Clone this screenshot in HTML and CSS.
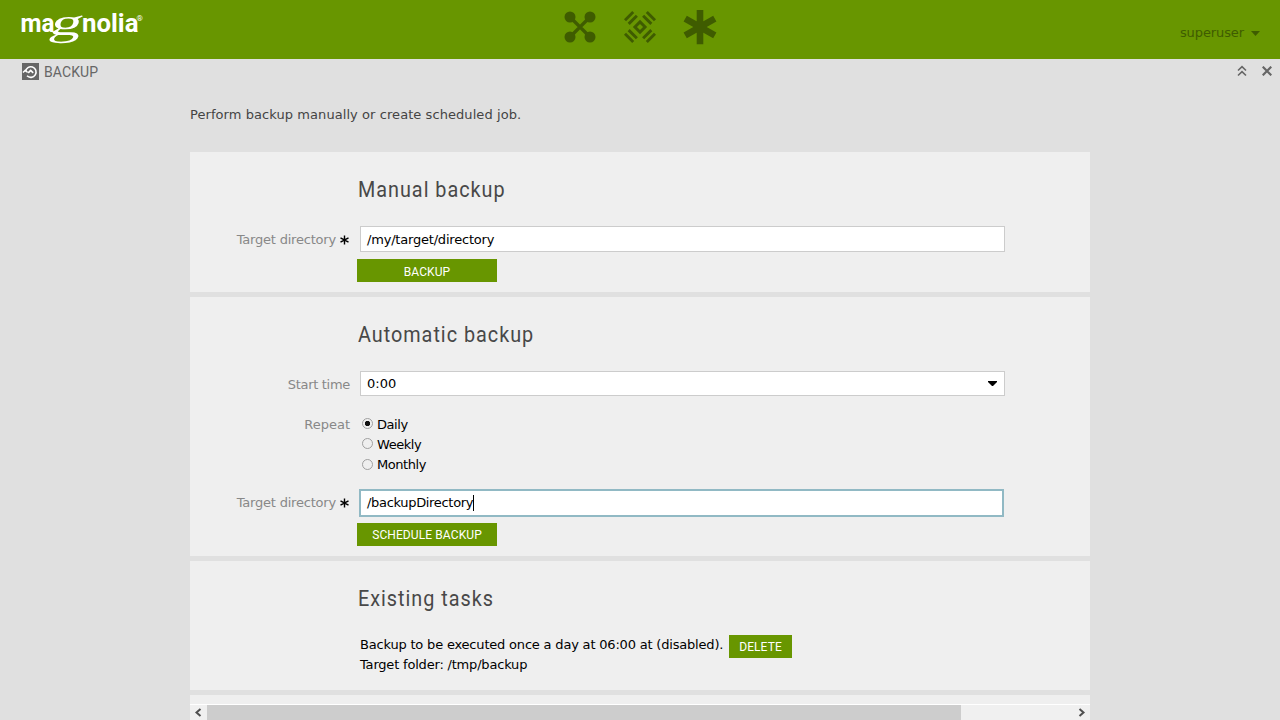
FILE: index.html
```html
<!DOCTYPE html>
<html lang="en">
<head>
<meta charset="utf-8">
<title>Backup</title>
<link rel="stylesheet" href="styles.css">
</head>
<body>
<header class="top">
  <svg class="logo" width="150" height="50" viewBox="0 0 150 50" fill="#fff">
    <g font-family="Roboto, sans-serif" font-weight="700" font-size="26">
      <text x="20.500" y="32" textLength="34" lengthAdjust="spacingAndGlyphs">ma</text>
      <text x="82" y="32" textLength="56.500" lengthAdjust="spacingAndGlyphs">nolia</text>
    </g>
    <text transform="translate(48 34.500) skewX(-16)" font-family="Liberation Serif, serif" font-size="38" textLength="32" lengthAdjust="spacingAndGlyphs">g</text>
    <text x="136.500" y="20.500" font-family="Roboto, sans-serif" font-size="8">®</text>
  </svg>
  <nav class="apps">
    <svg width="36" height="36" viewBox="-18 -18 36 36" fill="#3f5c00">
      <path d="M-10-10L10 10M10-10L-10 10" stroke="#3f5c00" stroke-width="3.200"/>
      <circle cx="-10" cy="-10" r="5.500"/><circle cx="10" cy="-10" r="5.500"/>
      <circle cx="-10" cy="10" r="5.500"/><circle cx="10" cy="10" r="5.500"/>
    </svg>
    <svg width="36" height="36" viewBox="-18 -18 36 36" fill="none" stroke="#3f5c00" stroke-width="2.900">
      <g transform="rotate(45)">
        <rect x="-3.600" y="-3.600" width="7.200" height="7.200"/>
        <path d="M-5.800-10.200H5.800M-5.800-15.400H5.800M-5.800 10.200H5.800M-5.800 15.400H5.800M-10.200-5.800V5.800M-15.400-5.800V5.800M10.200-5.800V5.800M15.400-5.800V5.800"/>
      </g>
    </svg>
    <svg width="36" height="36" viewBox="-18 -18 36 36" stroke="#3f5c00" stroke-width="6.600">
      <path d="M0-17V17.300M-14.800-8.400L14.800 8.400M-14.800 8.400L14.800-8.400"/>
    </svg>
  </nav>
  <div class="user"><span>superuser</span><svg width="9" height="5"><path d="M0 0H9L4.500 5Z" fill="#3f5c00"/></svg></div>
</header>
<div class="tabbar">
  <svg width="17" height="17" viewBox="0 0 17 17" fill="none" stroke="#fff">
    <rect width="17" height="17" fill="#666" stroke="none"/>
    <path d="M3.500 8.500A5.300 5.300 0 1 1 5 12.800" stroke-width="1.600"/>
    <path d="M1 9.500L3.300 7.300L5.600 9.500" stroke-width="1.500"/>
    <path d="M6.200 9.800L8.700 7.400L11.200 9.800" stroke-width="1.700"/>
  </svg>
  <span class="tabname">BACKUP</span>
  <svg class="collapse" width="10" height="12" viewBox="0 0 10 12" fill="none" stroke="#666" stroke-width="1.600"><path d="M1 5.500L5 1.700L9 5.500M1 10.500L5 6.700L9 10.500"/></svg>
  <svg width="10" height="10" viewBox="0 0 10 10" stroke="#666" stroke-width="2.200"><path d="M.700.700L9.300 9.300M9.300.700L.700 9.300"/></svg>
</div>
<main class="content">
  <p class="intro">Perform backup manually or create scheduled job.</p>
  <section class="panel manual">
    <h2>Manual backup</h2>
    <div class="row"><label class="lbl low">Target directory<svg class="req" width="9" height="10" viewBox="0 0 9 10" stroke="#000" stroke-width="1.400"><path d="M4.500 .500V9.500M.500 2.800L8.500 7.200M.500 7.200L8.500 2.800"/></svg></label><div class="field low">/my/target/directory</div></div>
    <button class="btn low"><span>BACKUP</span></button>
  </section>
  <section class="panel auto">
    <h2>Automatic backup</h2>
    <div class="row"><label class="lbl low tight">Start time</label><div class="field select"><span>0:00</span><svg width="9" height="5"><path d="M0 0H9V1L5 5H4L0 1Z"/></svg></div></div>
    <div class="row repeat"><label class="lbl">Repeat</label>
      <div class="radios">
        <div class="radio"><i class="dot on"></i>Daily</div>
        <div class="radio"><i class="dot high"></i>Weekly</div>
        <div class="radio"><i class="dot"></i>Monthly</div>
      </div>
    </div>
    <div class="row focusrow"><label class="lbl">Target directory<svg class="req" width="9" height="10" viewBox="0 0 9 10" stroke="#000" stroke-width="1.400"><path d="M4.500 .500V9.500M.500 2.800L8.500 7.200M.500 7.200L8.500 2.800"/></svg></label><div class="field focus">/backupDirectory<i class="caret"></i></div></div>
    <button class="btn"><span>SCHEDULE BACKUP</span></button>
  </section>
  <section class="panel tasks">
    <h2>Existing tasks</h2>
    <div class="task">
      <div class="tasktext"><div>Backup to be executed once a day at 06:00 at (disabled).</div><div>Target folder: /tmp/backup</div></div>
      <button class="btn del"><span>DELETE</span></button>
    </div>
  </section>
  <section class="panel rest"></section>
  <div class="scroll">
    <svg width="17" height="15" viewBox="0 0 17 15" fill="none" stroke="#505050" stroke-width="2"><path d="M10.500 4L6.500 7.500L10.500 11"/></svg>
    <div class="thumb"></div>
    <svg width="17" height="15" viewBox="0 0 17 15" fill="none" stroke="#505050" stroke-width="2"><path d="M6.500 4L10.500 7.500L6.500 11"/></svg>
  </div>
</main>
</body>
</html>
```
FILE: styles.css
```css
* { box-sizing: border-box; }
body { margin: 0; width: 1280px; height: 720px; overflow: hidden; background: #e0e0e0; font: 13px/20px Verdana, "DejaVu Sans", sans-serif; color: #000; }
svg { display: block; flex: none; }
.top { height: 59px; background: #689600; display: grid; grid-template-columns: 1fr auto 1fr; }
.apps { display: flex; gap: 24px; padding-top: 9px; }
.user { display: flex; justify-content: flex-end; align-items: center; gap: 7px; padding: 7px 20px 0 0; color: #3f5c00; letter-spacing: -.1px; }
.tabbar { height: 46px; padding: 4px 8px 0 22px; display: flex; align-items: flex-start; }
.tabbar svg:last-child { margin: 3px 0 0 15px; }
.tabname { font: 14px/18px Roboto, sans-serif; color: #666; margin-left: 5px; flex: 1; letter-spacing: .1px; }
.collapse { margin-top: 2px; }
.content { width: 900px; margin: 0 auto; }
.intro { margin: 0; height: 47px; color: #444; letter-spacing: .07px; }
.panel { background: #efefef; margin-bottom: 5px; overflow: hidden; }
.manual { height: 140px; }
.auto { height: 259px; }
.tasks { height: 129px; }
.rest { height: 9px; margin: 0; }
h2 { margin: 24px 0 22px 168px; font: 400 22px/28px Roboto, sans-serif; color: #484848; letter-spacing: 1.1px; white-space: nowrap; transform: scaleX(.9); transform-origin: left; }
.row { display: flex; gap: 10px; }
.lbl { width: 160px; display: flex; justify-content: flex-end; align-items: center; gap: 4px; color: #888; height: 26px; letter-spacing: -.2px; }
.req { margin-right: 1px; }
.tight { letter-spacing: -.3px; }
.field { width: 645px; height: 26px; background: #fff; border: 1px solid #ccc; padding: 0 6px; line-height: 24px; letter-spacing: -.2px; }
.lbl.low { padding-top: 2px; }
.field.low { padding-top: 1px; }
.select { height: 25px; display: flex; justify-content: space-between; align-items: center; padding-right: 7px; letter-spacing: 0; line-height: 23px; }
.repeat { margin-top: 17px; }
.repeat .lbl { height: 22px; letter-spacing: 0; }
.radio { display: flex; align-items: center; height: 20px; gap: 4px; padding-left: 2px; letter-spacing: -.45px; }
.radios { padding-top: 1px; }
.dot { width: 11px; height: 11px; border: 1px solid #a0a0a0; border-radius: 50%; margin-top: -1px; }
.on, .high { margin-top: -3px; }
.on { background: radial-gradient(circle, #111 0 2.3px, transparent 3px); }
.focusrow { margin-top: 14px; }
.focusrow .lbl { margin-right: -1px; height: 27px; }
.focus { height: 28px; border: 2px solid #91b9c4; padding-left: 6px; display: flex; align-items: center; letter-spacing: -.32px; }
.caret { width: 1px; height: 16px; background: #000; }
.btn { display: flex; align-items: center; justify-content: center; width: 140px; height: 23px; margin: 7px 0 0 167px; padding: 1px 0 0; border: 0; background: #689600; color: #fff; font: 12px/22px Roboto, sans-serif; letter-spacing: .1px; }
.btn.low { padding-top: 3px; }
.focusrow + .btn { margin-top: 6px; }
.task { display: flex; margin-left: 170px; }
.tasktext { width: 369px; white-space: nowrap; letter-spacing: -.19px; }
.del { width: 63px; margin: 0; }
.scroll { height: 16px; border-top: 1px solid #fff; background: #f0f0f0; display: flex; }
.thumb { width: 754px; margin-right: 112px; background: #cdcdcd; }
```
